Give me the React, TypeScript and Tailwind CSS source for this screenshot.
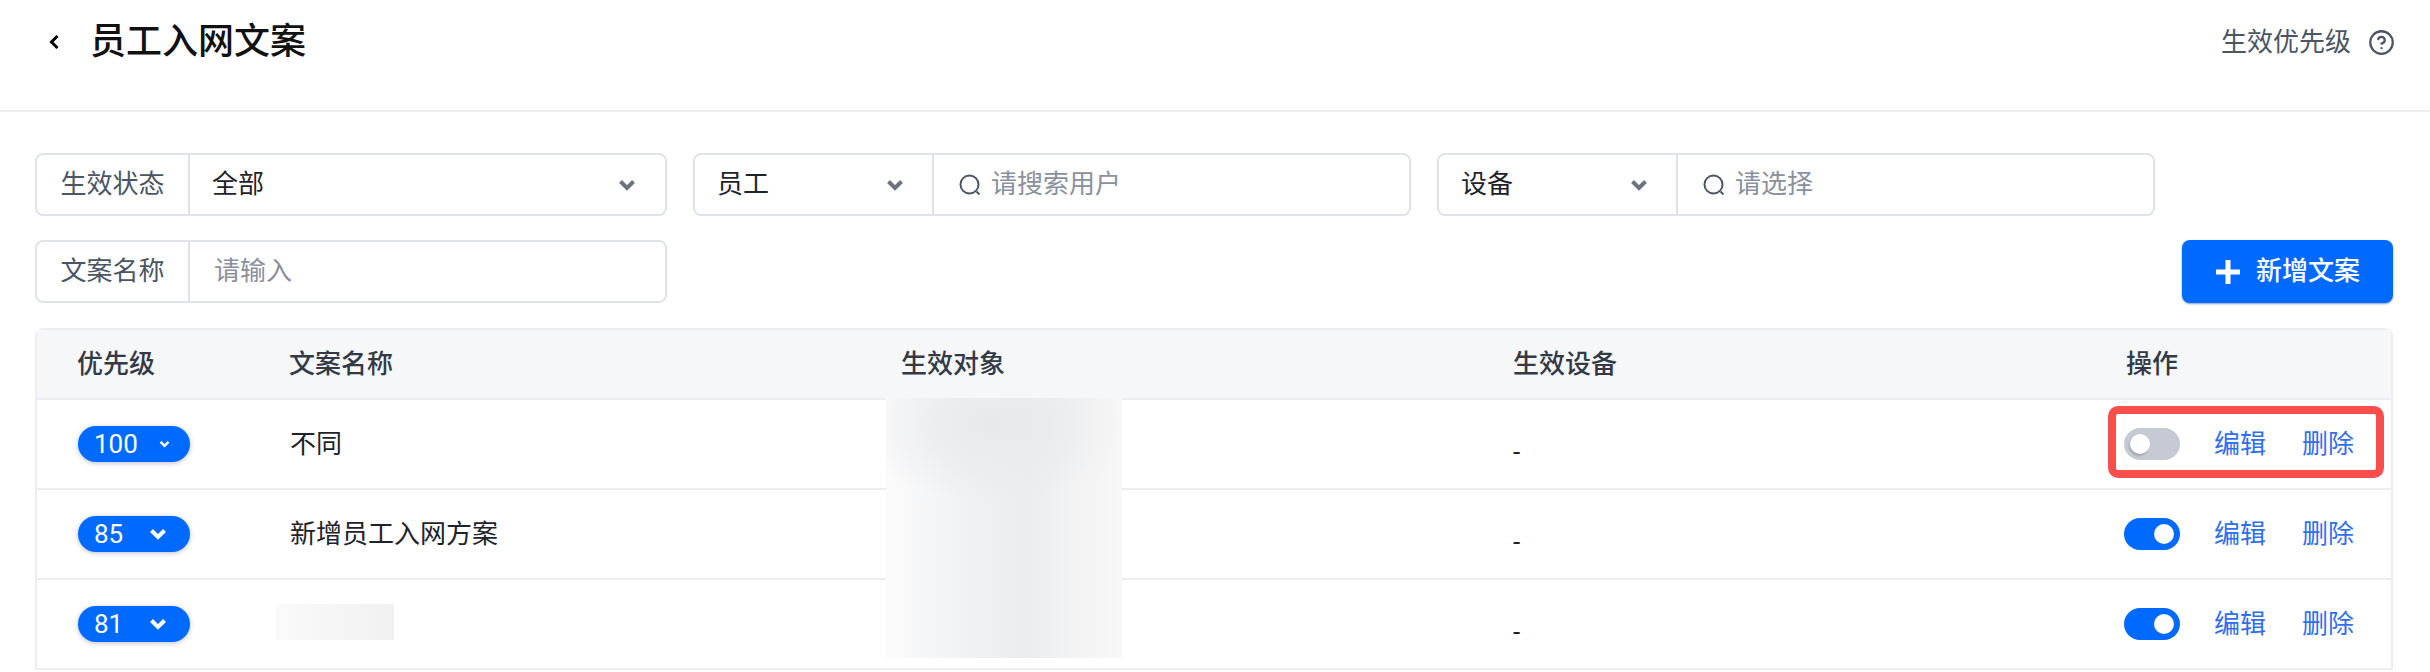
import { CircleHelp } from 'lucide-react';

const FONT = "font-['Roboto','Noto_Sans_CJK_SC',sans-serif]";

const rows = [
  { priority: '100', name: '不同', enabled: false, smallChevron: true },
  { priority: '85', name: '新增员工入网方案', enabled: true, smallChevron: false },
  { priority: '81', name: '', enabled: true, smallChevron: false },
];

function Chevron({ className }: { className: string }) {
  return (
    <svg viewBox="0 0 18 12" fill="none" className={className}>
      <path d="M2.5 2.5L9 9L15.5 2.5" stroke="currentColor" strokeWidth="4" />
    </svg>
  );
}

function SearchIcon() {
  return (
    <svg viewBox="0 0 24 24" fill="none" className="h-6 w-6 text-[#4b5563]">
      <circle cx="11.5" cy="11.5" r="9" stroke="currentColor" strokeWidth="2" />
      <path d="M18.5 18.5L21.5 21.5" stroke="currentColor" strokeWidth="2" />
    </svg>
  );
}

function Toggle({ on }: { on: boolean }) {
  return (
    <span
      className={`flex h-8 w-14 items-center rounded-full px-1.5 ${
        on ? 'justify-end bg-[#006aff]' : 'justify-start bg-[#c6cad4]'
      }`}
    >
      <span
        className={`h-5 w-5 rounded-full bg-white ${on ? '' : 'shadow-[-1px_2px_2px_rgba(70,75,90,0.3)]'}`}
      />
    </span>
  );
}

function PriorityPill({ value, small }: { value: string; small: boolean }) {
  return (
    <span
      className={`flex h-9 w-28 items-center justify-between rounded-full bg-[#006aff] pl-4 text-[26px] leading-none text-white shadow-[0_1px_5px_rgba(60,70,110,0.35)] ${
        small ? 'pr-5' : 'pr-[23px]'
      }`}
    >
      <span>{value}</span>
      {small ? <Chevron className="h-2 w-[11px]" /> : <Chevron className="h-3 w-[18px]" />}
    </span>
  );
}

function FieldBox({ className, children }: { className: string; children: React.ReactNode }) {
  return (
    <div className={`flex h-[63px] items-stretch rounded-lg border-2 border-[#e0e3ea] bg-white text-[26px] ${className}`}>
      {children}
    </div>
  );
}

function Picker({ label }: { label: string }) {
  return (
    <div className="flex w-[239px] items-center justify-between border-r-2 border-[#e0e3ea] pl-[22px] pr-[28px] text-[#1f2329]">
      <span>{label}</span>
      <Chevron className="h-3 w-[18px] text-[#6b7280]" />
    </div>
  );
}

function SearchValue({ placeholder }: { placeholder: string }) {
  return (
    <div className="flex flex-1 items-center gap-[9px] pl-6 text-[#8a909c]">
      <SearchIcon />
      <span>{placeholder}</span>
    </div>
  );
}

export default function App() {
  return (
    <main className={`h-[672px] overflow-hidden bg-white ${FONT}`}>
      <header className="flex h-[112px] items-start justify-between border-b-2 border-[#eeeef2] pl-[49px] pr-[35px] pt-[19px]">
        <div className="flex items-center gap-[31px]">
          <svg viewBox="0 0 10 14" fill="none" className="h-[14px] w-[10px] text-black">
            <path d="M8.5 1L2.5 7L8.5 13" stroke="currentColor" strokeWidth="3" />
          </svg>
          <h1 className="text-[36px] font-medium leading-[46px] text-[#111]">员工入网文案</h1>
        </div>
        <div className="flex items-center gap-[17px] pt-[5px] text-[26px] leading-[36px] text-[#4b5563]">
          <span>生效优先级</span>
          <CircleHelp className="h-[27px] w-[27px]" strokeWidth={2} />
        </div>
      </header>

      <section className="pl-[35px] pr-[37px] pt-[41px]">
        <div className="flex gap-[26px]">
          <FieldBox className="w-[632px]">
            <div className="flex w-[153px] items-center justify-center border-r-2 border-[#e0e3ea] text-[#4b5563]">
              生效状态
            </div>
            <div className="flex flex-1 items-center justify-between pl-[22px] pr-[29px] text-[#1f2329]">
              <span>全部</span>
              <Chevron className="h-3 w-[18px] text-[#6b7280]" />
            </div>
          </FieldBox>
          <FieldBox className="w-[718px]">
            <Picker label="员工" />
            <SearchValue placeholder="请搜索用户" />
          </FieldBox>
          <FieldBox className="w-[718px]">
            <Picker label="设备" />
            <SearchValue placeholder="请选择" />
          </FieldBox>
        </div>

        <div className="mt-6 flex items-center justify-between">
          <FieldBox className="w-[632px]">
            <div className="flex w-[153px] items-center justify-center border-r-2 border-[#e0e3ea] text-[#4b5563]">
              文案名称
            </div>
            <div className="flex flex-1 items-center pl-6 text-[#8a909c]">请输入</div>
          </FieldBox>
          <button
            type="button"
            className="flex h-[63px] w-[211px] items-center gap-4 rounded-lg bg-[#006aff] pl-[34px] text-[26px] font-medium text-white shadow-[0_1px_2px_rgba(0,60,160,0.5)]"
          >
            <svg viewBox="0 0 24 24" fill="none" className="h-6 w-6">
              <path d="M12 0V24M0 12H24" stroke="currentColor" strokeWidth="5" />
            </svg>
            新增文案
          </button>
        </div>

        <div className="relative mt-[25px] rounded-t-lg border-x-2 border-t-2 border-[#eeeef2] text-[26px] text-[#1f2329]">
          <div className="grid h-[70px] grid-cols-[212px_612px_612px_613px_1fr] items-center border-b-2 border-[#eeeef2] bg-[#f6f7f9] font-medium text-[#333a45]">
            <div className="pl-[40px]">优先级</div>
            <div className="pl-[40px]">文案名称</div>
            <div className="pl-[40px]">生效对象</div>
            <div className="pl-[40px]">生效设备</div>
            <div className="pl-[40px]">操作</div>
          </div>

          {rows.map((row, index) => (
            <div
              key={row.priority}
              className="grid h-[90px] grid-cols-[212px_612px_612px_613px_1fr] items-center border-b-2 border-[#eeeef2]"
            >
              <div className="pl-[41px]">
                <PriorityPill value={row.priority} small={row.smallChevron} />
              </div>
              <div className="pl-[41px]">{row.name}</div>
              <div />
              <div className="pl-[40px] pt-4">-</div>
              <div className="flex items-center pl-[38px]">
                <Toggle on={row.enabled} />
                <a className="ml-[34px] text-[#2f6fed]">编辑</a>
                <a className="ml-[36px] text-[#2f6fed]">删除</a>
                {index === 0 && (
                  <span className="absolute right-[7px] top-[76px] h-[72px] w-[276px] rounded-[10px] border-[8px] border-[#f84f4d]" />
                )}
              </div>
            </div>
          ))}

          {/* blurred-out cells */}
          <div className="absolute left-[849px] top-[68px] h-[260px] w-[236px] bg-[radial-gradient(ellipse_60%_30%_at_45%_10%,#e8e9eb,transparent),linear-gradient(90deg,#fbfbfc_0%,#f0f1f2_35%,#ecedef_60%,#f8f8f8_100%)]" />
          <div className="absolute left-[239px] top-[274px] h-9 w-[118px] bg-gradient-to-r from-[#fafafb] to-[#f1f1f2]" />
        </div>
      </section>
    </main>
  );
}
